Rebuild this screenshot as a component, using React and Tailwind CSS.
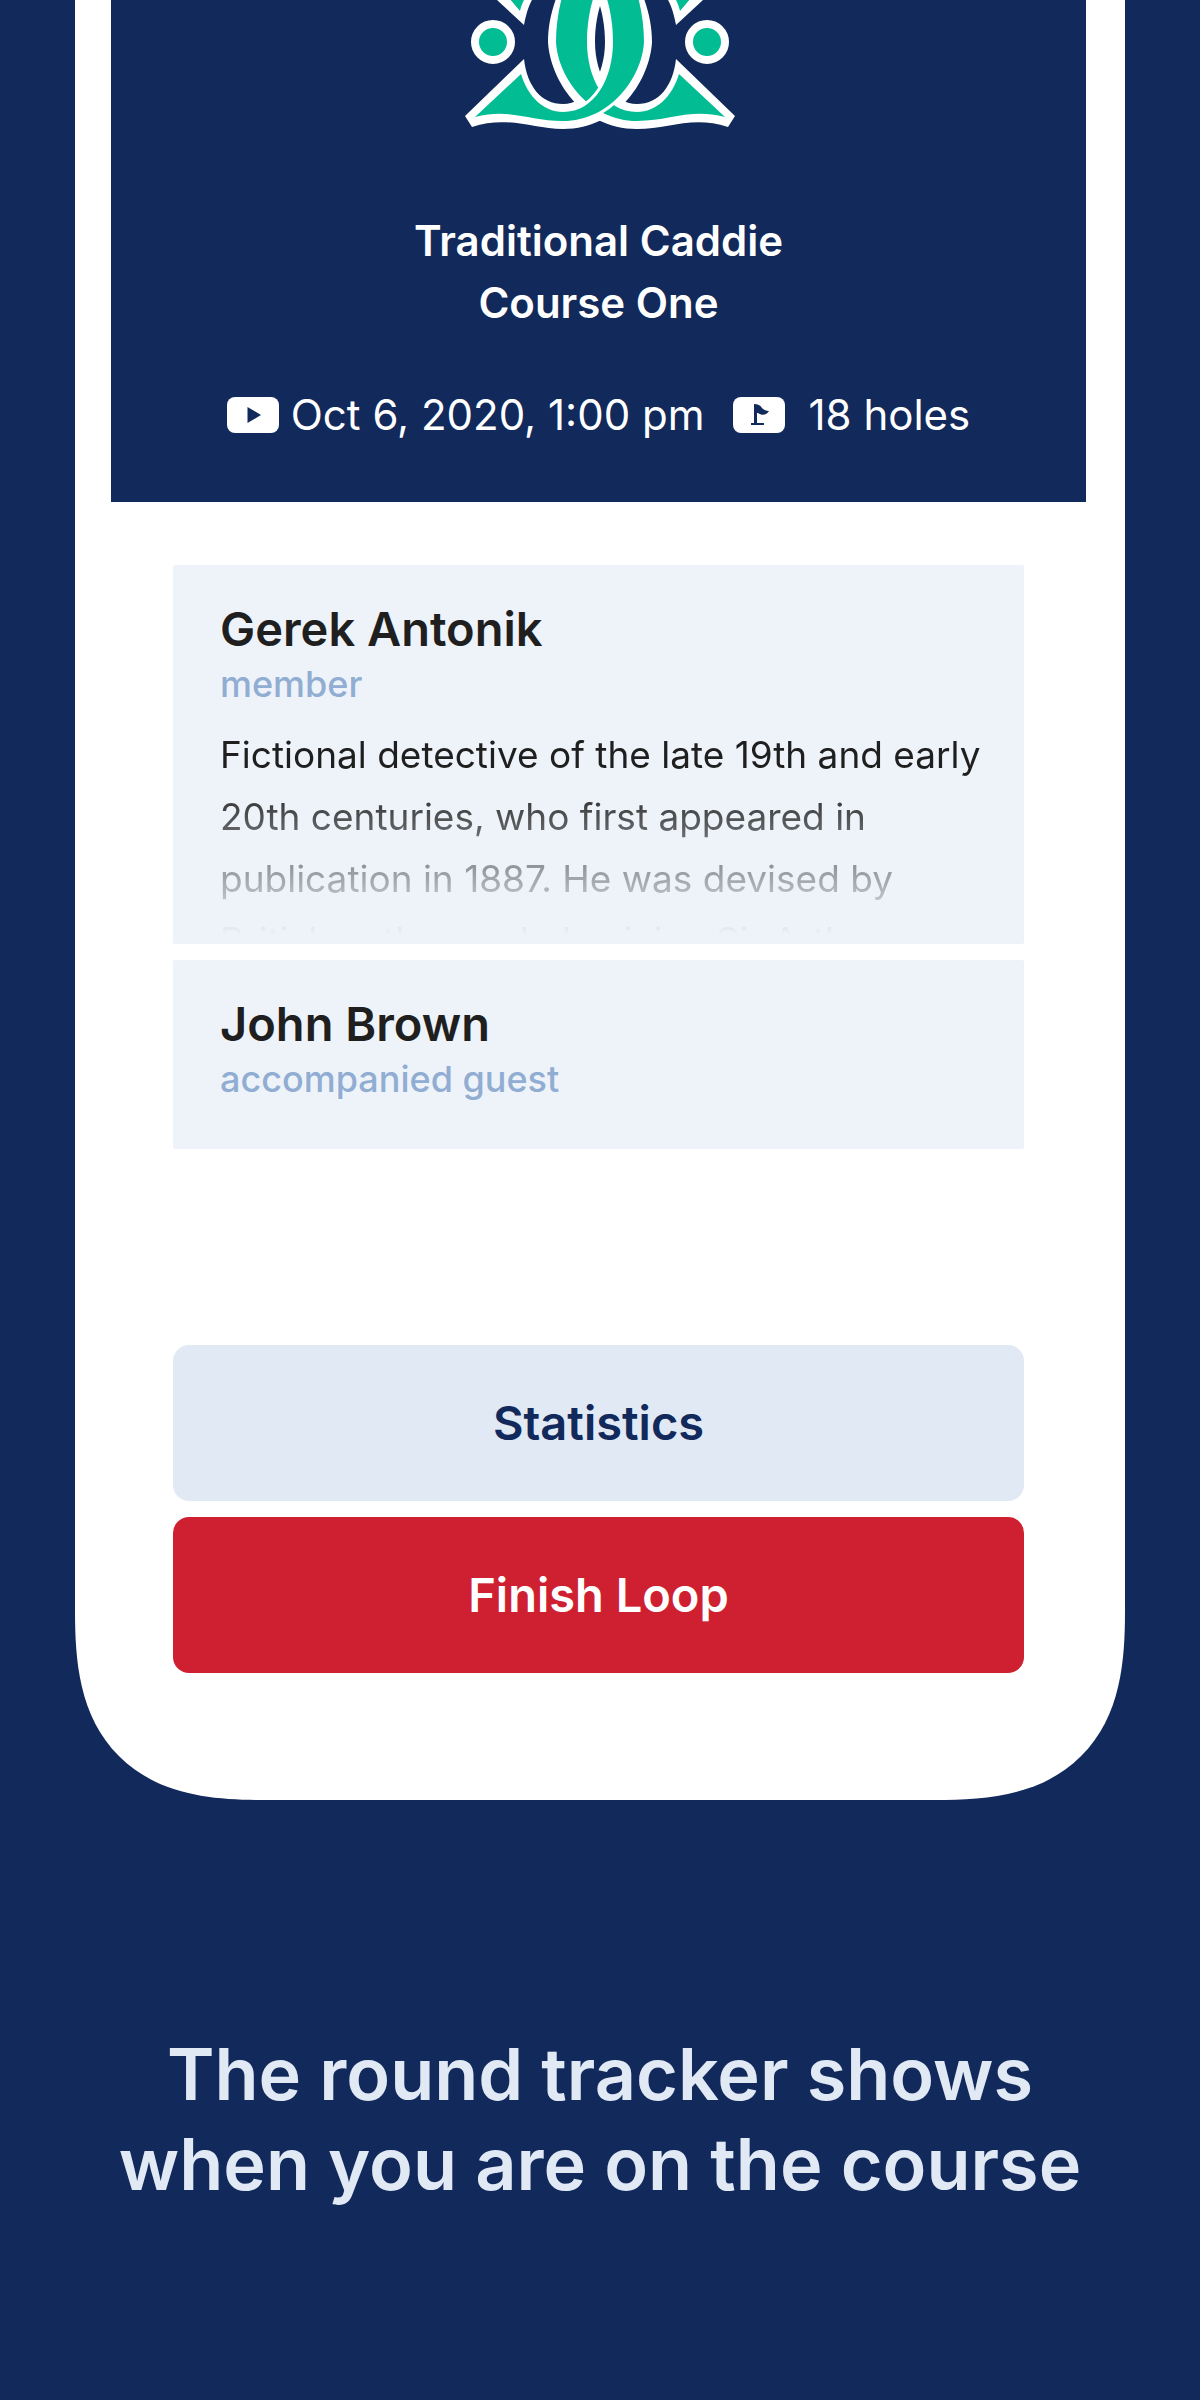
import React from "react";

const WHITE_BAND =
  "M15 116 L74 59 C77 86 91 104 113 104 C137 104 155 76 155 42 C155 20 150 4 144 -12 L190 -12 C198 8 202 24 202 42 C200 78 170 129 113 129 C82 129 57 115 22 127 Z";
const GREEN_BAND =
  "M25 117 L71 74 C78 97 94 112 113 112 C145 112 163 78 163 42 C163 18 158 0 152 -16 L184 -16 C191 4 194 24 194 42 C192 78 160 121 113 121 C80 121 60 108 25 117 Z";
const MIRROR = "translate(300 0) scale(-1 1)";

function CrestOrnaments() {
  return (
    <>
      <path d="M47 0 L74 25 C76 15 78 7 83 -2 Z" fill="#ffffff" />
      <path d="M59 -2 L70 11 C71 6 73 2 75 -2 Z" fill="#02bd94" />
      <circle cx="43" cy="42" r="18" fill="#02bd94" stroke="#ffffff" strokeWidth="8" />
    </>
  );
}

function Crest() {
  return (
    <svg viewBox="0 0 300 140" className="ml-[3px] h-[140px] w-[300px]" role="img" aria-label="Club crest">
      <CrestOrnaments />
      <g transform={MIRROR}>
        <CrestOrnaments />
      </g>
      <path d={WHITE_BAND} fill="#ffffff" />
      <g transform={MIRROR}>
        <path d={WHITE_BAND} fill="#ffffff" />
        <path d={GREEN_BAND} fill="#02bd94" />
      </g>
      <path d={GREEN_BAND} fill="#02bd94" stroke="#ffffff" strokeWidth="6" />
      <path d={GREEN_BAND} fill="#02bd94" />
    </svg>
  );
}

function PlayBadge() {
  return (
    <svg viewBox="0 0 52 36" className="h-9 w-[52px] shrink-0" aria-hidden="true">
      <rect width="52" height="36" rx="8" fill="#ffffff" />
      <path d="M20.500 10 L34 18 L20.500 26 Z" fill="#12295b" />
    </svg>
  );
}

function FlagBadge() {
  return (
    <svg viewBox="0 0 52 36" className="h-9 w-[52px] shrink-0" aria-hidden="true">
      <rect width="52" height="36" rx="8" fill="#ffffff" />
      <path d="M21 7 C25 7 27 8 29 11 C31 13 33 14 36 14 C34 18 29 19 25 16 L24 16 V26 H31 V28 H18 V26 H21 Z" fill="#12295b" />
    </svg>
  );
}

function PlayerCard({ name, role, children }) {
  return (
    <li className="rounded-xs bg-[#eef3fa] pt-9 pr-10 pb-[9px] pl-[47px] last:pb-[43px]">
      <h2 className="text-[47px] leading-[56px] font-semibold text-[#1f1f1f]">{name}</h2>
      <p className="text-[36px] leading-[54px] font-medium text-[#91add2]">{role}</p>
      {children}
    </li>
  );
}

export default function App() {
  return (
    <main className="min-h-screen bg-[#12295b] font-['Inter',sans-serif]">
      <section className="mx-[6.25%] rounded-b-[190px] bg-white pr-[39px] pb-[127px] pl-9 [corner-shape:superellipse(1.4)]">
        <header className="flex flex-col items-center bg-[#12295b] pb-14 text-white">
          <Crest />
          <h1 className="mt-[70px] text-center text-[42px] leading-[62px] font-semibold">
            Traditional Caddie
            <br />
            Course One
          </h1>
          <div className="mt-[50px] flex items-center text-[42px] leading-[62px] whitespace-nowrap">
            <PlayBadge />
            <time className="ml-3">Oct 6, 2020, 1:00 pm</time>
            <span className="ml-7 flex items-center gap-6">
              <FlagBadge />
              18 holes
            </span>
          </div>
        </header>
        <div className="px-[62px] pt-[63px]">
          <ul className="flex flex-col gap-4">
            <PlayerCard name="Gerek Antonik" role="member">
              <p className="mt-[13px] h-[211px] overflow-hidden text-[37px] leading-[62px] text-[#1f1f1f] [mask-image:linear-gradient(black_27%,transparent)]">
                Fictional detective of the late 19th and early 20th centuries, who first appeared in publication in 1887. He was devised by British author and physician Sir Arthur
              </p>
            </PlayerCard>
            <PlayerCard name="John Brown" role="accompanied guest" />
          </ul>
          <div className="mt-[196px] flex flex-col gap-4">
            <button type="button" className="h-[156px] rounded-2xl bg-[#e1e9f5] text-[47px] font-semibold text-[#12295b]">Statistics</button>
            <button type="button" className="h-[156px] rounded-2xl bg-[#cf2032] text-[47px] font-semibold text-white">Finish Loop</button>
          </div>
        </div>
      </section>
      <p className="mt-[229px] pb-[190px] text-center text-[72px] leading-[90px] font-semibold text-[#e1e9f5]">
        The round tracker shows
        <br />
        when you are on the course
      </p>
    </main>
  );
}
